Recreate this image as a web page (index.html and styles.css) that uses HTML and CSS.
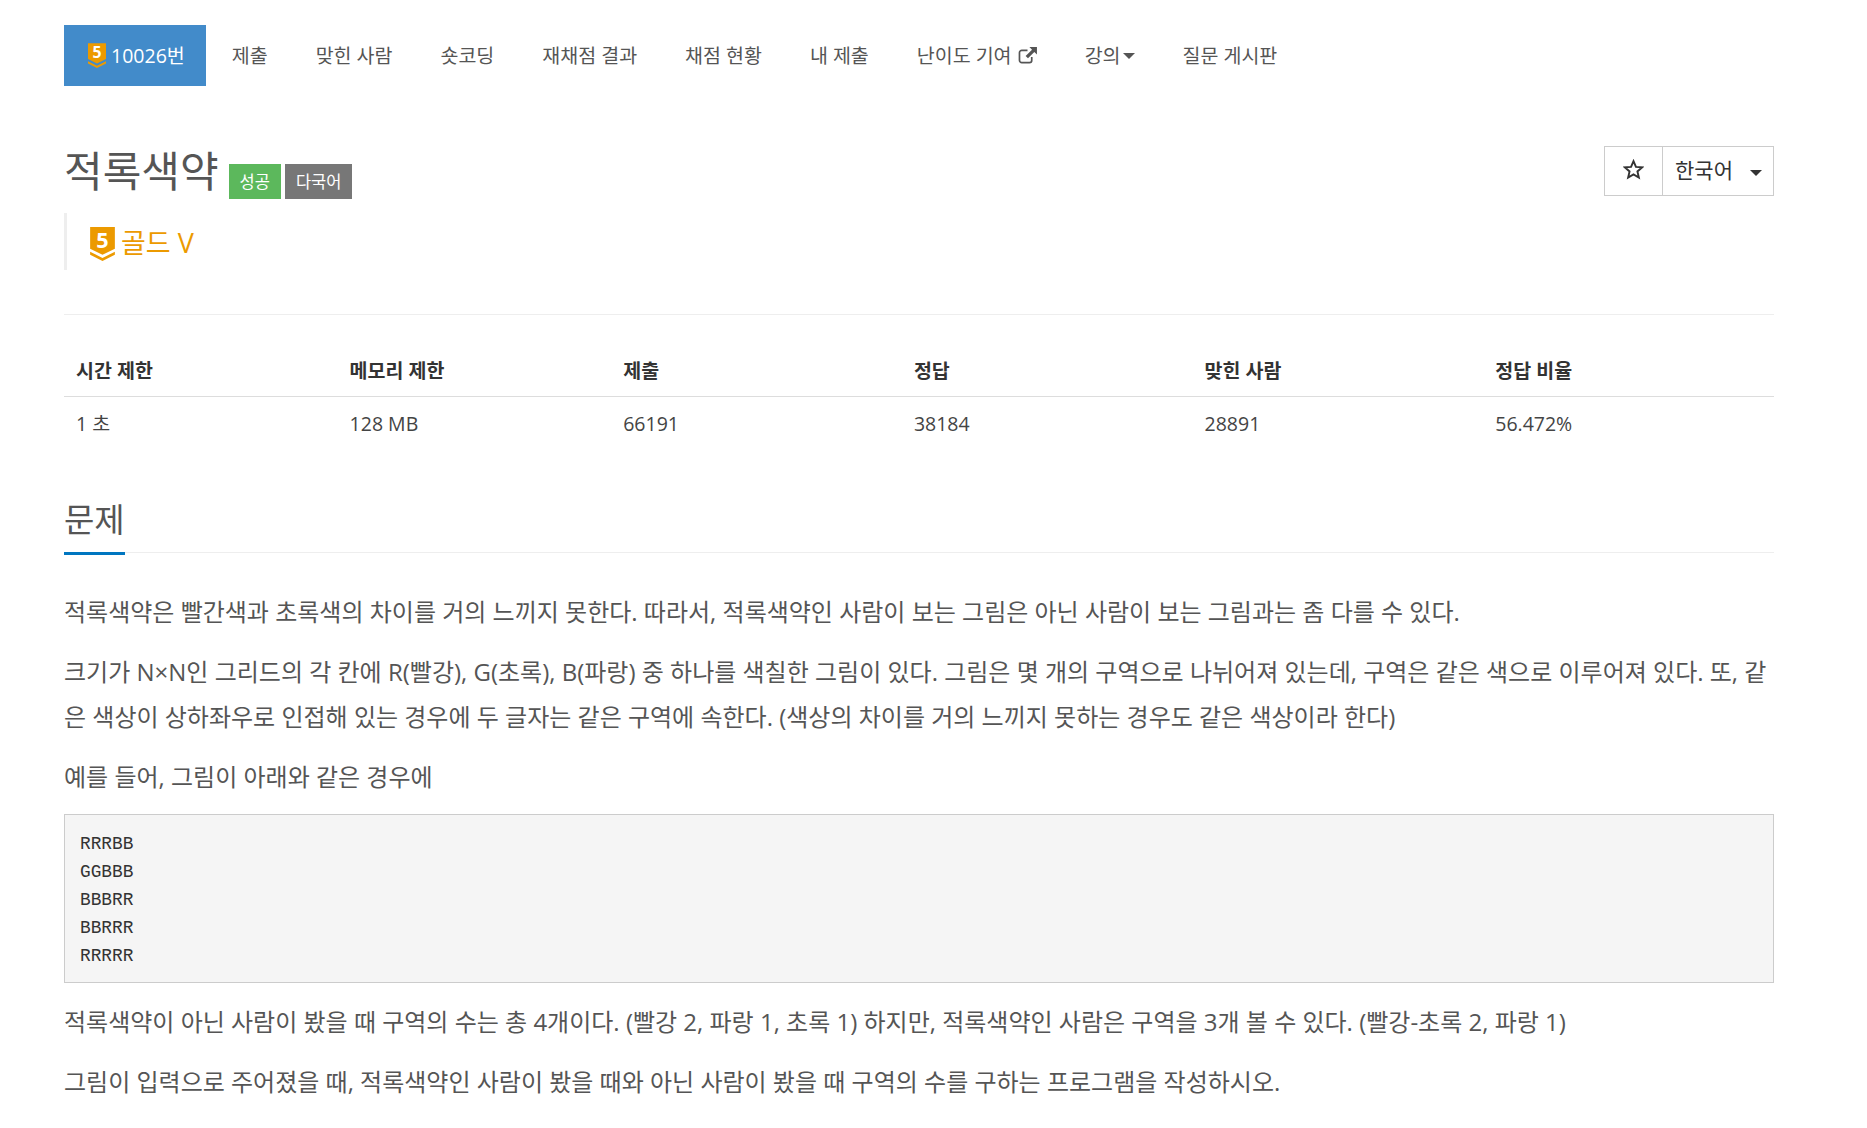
FILE: index.html
```html
<!DOCTYPE html>
<html lang="ko">
<head>
<meta charset="utf-8">
<title>10026번: 적록색약</title>
<link rel="stylesheet" href="styles.css">
</head>
<body>
<div class="page">
  <nav class="nav">
    <a class="nav-item active"><svg class="tier tier-sm" viewBox="0 0 24 33"><path d="M0 0H24V21L12 27L0 21Z" fill="#ec9a00"/><path d="M0 24L12 30L24 24V27L12 33L0 27Z" fill="#ec9a00"/><text x="12" y="20" text-anchor="middle" class="tier-num">5</text></svg> 10026번</a>
    <a class="nav-item">제출</a>
    <a class="nav-item">맞힌 사람</a>
    <a class="nav-item">숏코딩</a>
    <a class="nav-item">재채점 결과</a>
    <a class="nav-item">채점 현황</a>
    <a class="nav-item">내 제출</a>
    <a class="nav-item">난이도 기여 <svg class="ext" viewBox="0 0 20 18"><path d="M14.5 10.5V14a2.5 2.5 0 0 1-2.5 2.5H4A2.5 2.5 0 0 1 1.5 14V6A2.5 2.5 0 0 1 4 3.5H10" fill="none" stroke="#555" stroke-width="1.8"/><path d="M12 0H20V8L17.2 5.2L10.5 12L8 9.5L14.8 2.8Z" fill="#555"/></svg></a>
    <a class="nav-item">강의<span class="caret"></span></a>
    <a class="nav-item">질문 게시판</a>
  </nav>

  <header class="head">
    <div class="title-row">
      <h1 class="title">적록색약</h1>
      <span class="badge badge-green">성공</span>
      <span class="badge badge-gray">다국어</span>
    </div>
    <div class="btn-group">
      <span class="btn btn-star"><svg class="star" viewBox="0 0 24 24"><path d="M12 2.5L14.8 9L21.8 9.6L16.5 14.2L18.1 21.2L12 17.5L5.9 21.2L7.5 14.2L2.2 9.6L9.2 9Z" fill="none" stroke="#333" stroke-width="2.2" stroke-linejoin="miter"/></svg></span>
      <span class="btn btn-lang">한국어<span class="caret caret-lang"></span></span>
    </div>
  </header>

  <blockquote class="tier-block">
    <svg class="tier tier-lg" viewBox="0 0 24 33"><path d="M0 0H24V21L12 27L0 21Z" fill="#ec9a00"/><path d="M0 24L12 30L24 24V27L12 33L0 27Z" fill="#ec9a00"/><text x="12" y="20" text-anchor="middle" class="tier-num">5</text></svg>
    <span class="tier-name">골드 V</span>
  </blockquote>

  <hr class="rule">

  <table class="info">
    <thead>
      <tr><th class="c16">시간 제한</th><th class="c16">메모리 제한</th><th class="c17">제출</th><th class="c17">정답</th><th class="c17">맞힌 사람</th><th class="c17">정답 비율</th></tr>
    </thead>
    <tbody>
      <tr><td>1 초</td><td>128 MB</td><td>66191</td><td>38184</td><td>28891</td><td>56.472%</td></tr>
    </tbody>
  </table>

  <section class="problem">
    <div class="section-head"><h2 class="section-title">문제</h2></div>
    <p>적록색약은 빨간색과 초록색의 차이를 거의 느끼지 못한다. 따라서, 적록색약인 사람이 보는 그림은 아닌 사람이 보는 그림과는 좀 다를 수 있다.</p>
    <p>크기가 N×N인 그리드의 각 칸에 R(빨강), G(초록), B(파랑) 중 하나를 색칠한 그림이 있다. 그림은 몇 개의 구역으로 나뉘어져 있는데, 구역은 같은 색으로 이루어져 있다. 또, 같은 색상이 상하좌우로 인접해 있는 경우에 두 글자는 같은 구역에 속한다. (색상의 차이를 거의 느끼지 못하는 경우도 같은 색상이라 한다)</p>
    <p>예를 들어, 그림이 아래와 같은 경우에</p>
    <pre class="sample">RRRBB
GGBBB
BBBRR
BBRRR
RRRRR</pre>
    <p>적록색약이 아닌 사람이 봤을 때 구역의 수는 총 4개이다. (빨강 2, 파랑 1, 초록 1) 하지만, 적록색약인 사람은 구역을 3개 볼 수 있다. (빨강-초록 2, 파랑 1)</p>
    <p>그림이 입력으로 주어졌을 때, 적록색약인 사람이 봤을 때와 아닌 사람이 봤을 때 구역의 수를 구하는 프로그램을 작성하시오.</p>
  </section>
</div>
</body>
</html>
```

FILE: styles.css
```css
* { box-sizing: border-box; }
html, body { margin: 0; padding: 0; background: #fff; overflow: hidden; height: 1128px; }
body {
  font-family: "Open Sans", "Noto Sans CJK KR", sans-serif;
  font-size: 24px;
  line-height: 45px;
  color: #555;
}
.page { padding: 25px 93px 0 64px; }

.nav { display: flex; height: 61px; }
.nav-item {
  display: flex; align-items: center;
  padding: 0 24px;
  color: #555;
  font-size: 19.5px;
  white-space: pre;
}
.nav-item.active { background: #428bca; color: #fff; padding-right: 21px; margin-right: 2px; }
.tier { flex: none; overflow: visible; }
.tier-sm { width: 18px; height: 25px; }
.tier-lg { width: 25px; height: 34px; }
.tier-num { fill: #fff; font: 700 21px/1 "Open Sans", sans-serif; }
.ext { width: 19px; height: 17px; margin-left: 1px; }
.caret {
  display: inline-block; width: 0; height: 0; margin-left: 2px;
  border-top: 6px solid #555; border-left: 6px solid transparent; border-right: 6px solid transparent;
}

.head { display: flex; justify-content: space-between; align-items: flex-start; margin-top: 60px; }
.title-row { display: flex; align-items: flex-start; }
.title { margin: 0; font-size: 42px; font-weight: 400; line-height: 50px; color: #555; }
.badge {
  margin-top: 18px; height: 35px;
  display: flex; align-items: center;
  font-size: 16.5px; line-height: 35px; color: #fff;
}
.badge-green { background: #5cb85c; margin-left: 10px; padding: 0 11px; }
.badge-gray { background: #777; margin-left: 4px; padding: 0 11px; }

.btn-group { display: flex; height: 50px; border: 1px solid #ccc; color: #333; }
.btn { display: flex; align-items: center; justify-content: center; line-height: 1; font-size: 21px; }
.btn-star { width: 58px; border-right: 1px solid #ccc; }
.star { width: 21px; height: 21px; margin-top: -3px; }
.btn-lang { width: 110px; justify-content: flex-start; padding: 0 0 2px 12px; }
.caret-lang { margin-left: 17px; margin-top: 5px; border-top-color: #333; }

.tier-block {
  margin: 14px 0 0; height: 57px; padding: 5px 0 0 23px;
  border-left: 3px solid #eee;
  display: flex; align-items: center; gap: 6px;
}
.tier-name { font-size: 27px; color: #ec9a00; line-height: 1; margin-top: -3px; }

.rule { margin: 44px 0 0; border: 0; border-top: 1px solid #eee; }

.info { width: 100%; margin-top: 30px; border-collapse: collapse; table-layout: fixed; font-size: 19.5px; }
.c16 { width: 16%; }
.c17 { width: 17%; }
.info th, .info td { text-align: left; padding: 0 12px; line-height: 25px; color: #333; }
.info th { font-weight: 700; height: 51px; border-bottom: 1px solid #ddd; }
.info td { height: 54px; color: #444; }

.problem { margin-top: 45px; }
.section-head { border-bottom: 1px solid #eee; height: 58px; margin-bottom: 36px; }
.section-title {
  display: inline-block; margin: 0; height: 60px;
  font-size: 33px; font-weight: 400; line-height: 50px; color: #555;
  border-bottom: 3px solid #0076c0;
}
.problem p { margin: 0 0 15px; }
.sample {
  margin: 0 0 16px; padding: 14.5px 15px 12px; height: 169px;
  background: #f5f5f5; border: 1px solid #ccc;
  font-family: "Liberation Mono", monospace; font-size: 17.8px; line-height: 28px; color: #333;
}
```
